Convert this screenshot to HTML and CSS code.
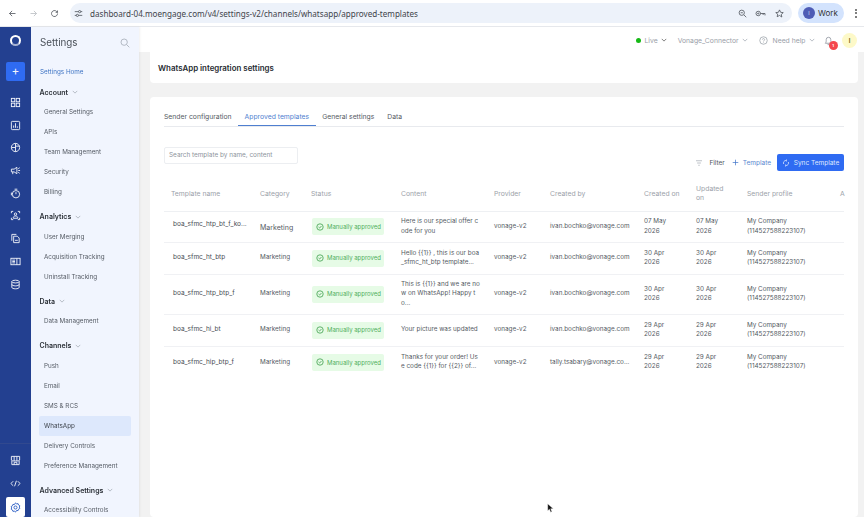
FILE: index.html
```html
<html lang="en">
<head>
	<meta charset="UTF-8">
	<title>WhatsApp integration settings</title>
	<link rel="stylesheet" href="styles.css">
</head>
<body>
	<div class="page">
		<div class="browser">
			<svg class="b-ico" viewBox="0 0 12 12"><path d="M10 6H2M5.500 2.500 2 6l3.500 3.500"/></svg>
			<svg class="b-ico faint" viewBox="0 0 12 12"><path d="M2 6h8M6.500 2.500 10 6 6.500 9.500"/></svg>
			<svg class="b-ico" viewBox="0 0 12 12"><path d="M10 6a4 4 0 1 1-1.200-2.800L10 4.500M10 2v2.500H7.500"/></svg>
			<div class="url">
				<svg class="b-ico small" viewBox="0 0 12 12"><path d="M1 3.500h5M9 3.500h2M3 8.500H1M6 8.500h5"/><circle cx="7.500" cy="3.500" r="1.500"/><circle cx="4.500" cy="8.500" r="1.500"/></svg>
				<span class="url-text">dashboard-04.moengage.com/v4/settings-v2/channels/whatsapp/approved-templates</span>
				<svg class="b-ico small push-right" viewBox="0 0 12 12"><circle cx="5" cy="5" r="3.500"/><path d="m8 8 3 3M3.500 5h3"/></svg>
				<svg class="b-ico key" viewBox="0 0 14 12"><circle cx="4" cy="6" r="3"/><circle cx="4" cy="6" r=".8"/><path d="M7 6h6v2.500M10.500 6v2"/></svg>
				<svg class="b-ico star" viewBox="0 0 12 12"><path d="m6 1.200 1.500 3.200 3.500.4-2.600 2.400.7 3.500L6 8.600l-3.100 1.700.7-3.500L1 4.800l3.500-.4z"/></svg>
			</div>
			<div class="work"><span class="work-dot">I</span>Work</div>
			<div class="dots"><i></i><i></i><i></i></div>
		</div>

		<div class="app">
			<div class="rail">
				<div class="logo"></div>
				<div class="plus">+</div>
				<div class="rail-icons">
					<svg viewBox="0 0 12 12"><rect x="1.500" y="1.500" width="3.700" height="3.700"/><rect x="6.800" y="1.500" width="3.700" height="3.700"/><rect x="1.500" y="6.800" width="3.700" height="3.700"/><rect x="6.800" y="6.800" width="3.700" height="3.700"/></svg>
					<svg viewBox="0 0 12 12"><rect x="1.500" y="1.500" width="9" height="9" rx="1"/><path d="M4 8.500V6M6 8.500v-5M8 8.500V7"/></svg>
					<svg viewBox="0 0 12 12"><circle cx="6" cy="6" r="4.500"/><path d="M6 1.500v9M1.500 6H6M6 4.500h4.300"/></svg>
					<svg viewBox="0 0 12 12"><path d="M1.500 4.500h3l3-2v7l-3-2h-3zM3 7.500v2.500M9 4l1.500-1M9 6h2M9 8l1.500 1"/></svg>
					<svg viewBox="0 0 12 12"><circle cx="6.500" cy="6.800" r="4"/><path d="M6.500 4.500v2.300M5 1.300h3M1.500 5v3"/></svg>
					<svg viewBox="0 0 12 12"><path d="M1.500 3.500v-2h2M8.500 1.500h2v2M10.500 8.500v2h-2M3.500 10.500h-2v-2"/><circle cx="6" cy="4.500" r="1.300"/><path d="M3.500 9c0-1.700 1-2.500 2.500-2.500S8.500 7.300 8.500 9z"/></svg>
					<svg viewBox="0 0 12 12"><path d="M2 8.500V1.500h5M4 10.500v-7h4l2 2v5zM5.500 8h3"/></svg>
					<svg viewBox="0 0 12 12"><rect x="1" y="2.500" width="10" height="7"/><path d="M2.500 4.500h3M2.500 6h3M2.500 7.500h3M7.500 2.500v7"/></svg>
					<svg viewBox="0 0 12 12"><ellipse cx="6" cy="2.800" rx="4" ry="1.500"/><path d="M2 2.800v6.400c0 .8 1.800 1.500 4 1.500s4-.7 4-1.500V2.800M2 6c0 .8 1.800 1.500 4 1.500S10 6.800 10 6"/></svg>
				</div>
				<div class="rail-bottom">
					<svg viewBox="0 0 12 12"><path d="M1.500 1.500h9v4l-1.500 1H3l-1.500-1zM2 6v4.500h8V6M4.500 1.500v5M7.500 1.500v5M4.500 10.500V8h3v2.500"/></svg>
					<svg viewBox="0 0 12 12"><path d="M3.500 3.500 1 6l2.500 2.500M8.500 3.500 11 6 8.500 8.500M7 3 5 9"/></svg>
					<div class="gear">
						<svg viewBox="0 0 12 12"><path d="m6 1 1.200 1 1.600-.2.500 1.500 1.400.8-.5 1.500.5 1.500-1.400.8-.5 1.500-1.600-.2L6 11 4.800 10l-1.600.2-.5-1.500-1.400-.8.5-1.500-.5-1.500 1.400-.8.500-1.500 1.600.2z"/><circle cx="6" cy="6" r="1.700"/></svg>
					</div>
				</div>
			</div>

			<div class="sidebar">
				<div class="side-head">
					<span class="side-title">Settings</span>
					<svg class="side-search" viewBox="0 0 12 12"><circle cx="5" cy="5" r="3.800"/><path d="m8 8 3.200 3.200"/></svg>
				</div>
				<div class="side-home">Settings Home</div>
				<div class="side-group"><span>Account</span><svg class="chev" viewBox="0 0 8 5"><path d="m1 1 3 3 3-3"/></svg></div>
				<div class="side-item">General Settings</div>
				<div class="side-item">APIs</div>
				<div class="side-item">Team Management</div>
				<div class="side-item">Security</div>
				<div class="side-item">Billing</div>
				<div class="side-group gap"><span>Analytics</span><svg class="chev" viewBox="0 0 8 5"><path d="m1 1 3 3 3-3"/></svg></div>
				<div class="side-item">User Merging</div>
				<div class="side-item">Acquisition Tracking</div>
				<div class="side-item">Uninstall Tracking</div>
				<div class="side-group gap"><span>Data</span><svg class="chev" viewBox="0 0 8 5"><path d="m1 1 3 3 3-3"/></svg></div>
				<div class="side-item">Data Management</div>
				<div class="side-group gap"><span>Channels</span><svg class="chev" viewBox="0 0 8 5"><path d="m1 1 3 3 3-3"/></svg></div>
				<div class="side-item">Push</div>
				<div class="side-item">Email</div>
				<div class="side-item">SMS &amp; RCS</div>
				<div class="side-item active">WhatsApp</div>
				<div class="side-item">Delivery Controls</div>
				<div class="side-item">Preference Management</div>
				<div class="side-group gap"><span>Advanced Settings</span><svg class="chev" viewBox="0 0 8 5"><path d="m1 1 3 3 3-3"/></svg></div>
				<div class="side-item">Accessibility Controls</div>
			</div>

			<div class="main">
				<div class="topbar">
					<span class="live-dot"></span>
					<span class="top-item dark">Live<svg class="chev" viewBox="0 0 8 5"><path d="m1 1 3 3 3-3"/></svg></span>
					<span class="top-item">Vonage_Connector<svg class="chev" viewBox="0 0 8 5"><path d="m1 1 3 3 3-3"/></svg></span>
					<span class="top-item last-item"><svg class="help" viewBox="0 0 12 12"><circle cx="6" cy="6" r="5"/><path d="M4.500 4.800C4.500 3 7.500 3 7.500 4.800 7.500 6 6 6 6 7.300M6 8.500v.7"/></svg>Need help<svg class="chev" viewBox="0 0 8 5"><path d="m1 1 3 3 3-3"/></svg></span>
					<span class="bell">
						<svg viewBox="0 0 12 12"><path d="M2.500 9c1-1 1-2 1-4a2.500 2.500 0 0 1 5 0c0 2 0 3 1 4zM5 10.500h2"/></svg>
						<b class="bell-badge">1</b>
					</span>
					<span class="avatar">I</span>
				</div>

				<div class="content">
					<div class="card head-card">WhatsApp integration settings</div>
					<div class="card body-card">
						<div class="tabs">
							<span class="tab">Sender configuration</span>
							<span class="tab on">Approved templates</span>
							<span class="tab">General settings</span>
							<span class="tab">Data</span>
						</div>
						<div class="tools">
							<div class="search">Search template by name, content</div>
							<div class="tool-right">
								<svg class="filter" viewBox="0 0 10 8"><path d="M1 1h8M2.500 4h5M4 7h2"/></svg>
								<span class="filter-text">Filter</span>
								<span class="add"><svg viewBox="0 0 10 10"><path d="M5 1v8M1 5h8"/></svg>Template</span>
								<span class="sync"><svg viewBox="0 0 12 12"><path d="M2.500 7.500A3.800 3.800 0 0 1 6 2.200M9.500 4.500A3.800 3.800 0 0 1 6 9.800M6 .8l1.500 1.400L6 3.600M6 8.400l-1.500 1.400L6 11.200"/></svg>Sync Template</span>
							</div>
						</div>
						<table class="grid">
							<colgroup>
								<col class="c1"><col class="c2"><col class="c3"><col class="c4"><col class="c5"><col class="c6"><col class="c7"><col class="c8"><col class="c9"><col class="c10">
							</colgroup>
							<thead>
								<tr><th>Template name</th><th>Category</th><th>Status</th><th>Content</th><th>Provider</th><th>Created by</th><th>Created on</th><th>Updated<br>on</th><th>Sender profile</th><th>A</th></tr>
							</thead>
							<tbody>
								<tr class="r1">
									<td class="name">boa_sfmc_htp_bt_f_ko...</td><td class="big">Marketing</td>
									<td><span class="pill"><svg viewBox="0 0 10 10"><circle cx="5" cy="5" r="4"/><path d="m3.200 5 1.300 1.300 2.300-2.500"/></svg>Manually approved</span></td>
									<td>Here is our special offer c<br>ode for you</td><td>vonage-v2</td><td>ivan.bochko@vonage.com</td><td>07 May<br>2026</td><td>07 May<br>2026</td><td>My Company<br>(114527588223107)</td><td></td>
								</tr>
								<tr class="r2">
									<td class="name">boa_sfmc_ht_btp</td><td>Marketing</td>
									<td><span class="pill"><svg viewBox="0 0 10 10"><circle cx="5" cy="5" r="4"/><path d="m3.200 5 1.300 1.300 2.300-2.500"/></svg>Manually approved</span></td>
									<td>Hello {{1}} , this is our boa<br>_sfmc_ht_btp template...</td><td>vonage-v2</td><td>ivan.bochko@vonage.com</td><td>30 Apr<br>2026</td><td>30 Apr<br>2026</td><td>My Company<br>(114527588223107)</td><td></td>
								</tr>
								<tr class="r3">
									<td class="name">boa_sfmc_htp_btp_f</td><td>Marketing</td>
									<td><span class="pill"><svg viewBox="0 0 10 10"><circle cx="5" cy="5" r="4"/><path d="m3.200 5 1.300 1.300 2.300-2.500"/></svg>Manually approved</span></td>
									<td>This is {{1}} and we are no<br>w on WhatsApp! Happy t<br>o...</td><td>vonage-v2</td><td>ivan.bochko@vonage.com</td><td>30 Apr<br>2026</td><td>30 Apr<br>2026</td><td>My Company<br>(114527588223107)</td><td></td>
								</tr>
								<tr class="r2">
									<td class="name">boa_sfmc_hi_bt</td><td>Marketing</td>
									<td><span class="pill"><svg viewBox="0 0 10 10"><circle cx="5" cy="5" r="4"/><path d="m3.200 5 1.300 1.300 2.300-2.500"/></svg>Manually approved</span></td>
									<td>Your picture was updated</td><td>vonage-v2</td><td>ivan.bochko@vonage.com</td><td>29 Apr<br>2026</td><td>29 Apr<br>2026</td><td>My Company<br>(114527588223107)</td><td></td>
								</tr>
								<tr class="r2 last">
									<td class="name">boa_sfmc_hip_btp_f</td><td>Marketing</td>
									<td><span class="pill"><svg viewBox="0 0 10 10"><circle cx="5" cy="5" r="4"/><path d="m3.200 5 1.300 1.300 2.300-2.500"/></svg>Manually approved</span></td>
									<td>Thanks for your order! Us<br>e code {{1}} for {{2}} of...</td><td>vonage-v2</td><td>tally.tsabary@vonage.co...</td><td>29 Apr<br>2026</td><td>29 Apr<br>2026</td><td>My Company<br>(114527588223107)</td><td></td>
								</tr>
							</tbody>
						</table>
					</div>
				</div>
			</div>
		</div>

		<svg class="cursor" viewBox="0 0 10 14"><path d="M1 1v10l2.500-2.300L5.200 13l1.800-.8-1.700-4.100H9z"/></svg>
	</div>
</body>
</html>
```

FILE: styles.css
```css
body{
	margin: 0;
	overflow: hidden;
	background: #fff;
	font-family: Inter, "Liberation Sans", sans-serif;
}
svg{
	fill: none;
	stroke: currentColor;
	stroke-width: 1;
	flex: none;
}
.page{
	width: 864px;
	height: 517px;
	overflow: hidden;
	filter: blur(.45px);
	will-change: filter;
	position: relative;
}

/* browser bar */
.browser{
	height: 26px;
	display: flex;
	align-items: center;
	padding: 0 0 0 8px;
	border-bottom: 1px solid #e6e8ec;
	color: #444a52;
}
.b-ico{
	width: 9px;
	height: 9px;
	margin-right: 12px;
}
.b-ico.faint{
	color: #b4b8be;
}
.url{
	width: 722px;
	height: 20px;
	margin-left: -1px;
	padding: 0 0 0 4px;
	background: #edf2fa;
	border-radius: 10px;
	display: flex;
	align-items: center;
	box-sizing: border-box;
}
.b-ico.small{
	margin-right: 4px;
}
.url-text{
	font-size: 8.100px;
	color: #3f444b;
	margin-left: 3px;
	white-space: nowrap;
	font-family: "Noto Sans", sans-serif;
}
.push-right{
	margin-left: auto;
}
.b-ico.key{
	width: 11px;
	margin: 0 9px 0 4px;
}
.b-ico.star{
	margin-right: 8px;
}
.work{
	width: 46px;
	height: 20px;
	margin-left: 6px;
	border-radius: 10px;
	background: #d3e3fd;
	display: flex;
	align-items: center;
	font-size: 8px;
	color: #333;
	box-sizing: border-box;
	padding-left: 5px;
	gap: 3px;
}
.work-dot{
	width: 12px;
	height: 12px;
	border-radius: 50%;
	background: #4d5bb5;
	color: #dfe3f7;
	font-size: 5px;
	text-align: center;
	line-height: 12px;
}
.dots{
	margin-left: 11px;
	display: flex;
	flex-direction: column;
	gap: 1.500px;
}
.dots i{
	width: 2px;
	height: 2px;
	border-radius: 50%;
	background: #555;
}

/* app frame */
.app{
	display: flex;
	height: 490px;
}
.rail{
	width: 31px;
	background: #234090;
	color: #f2f4fa;
	display: flex;
	flex-direction: column;
	align-items: center;
	flex: none;
}
.logo{
	width: 11px;
	height: 11px;
	margin-top: 8px;
	border: 2.500px solid #fff;
	border-bottom-color: rgba(255,255,255,.6);
	border-radius: 50%;
	box-sizing: border-box;
}
.plus{
	width: 19px;
	height: 19px;
	margin-top: 16px;
	background: #2f6bf2;
	border-radius: 2px;
	text-align: center;
	font-size: 12px;
	line-height: 18px;
}
.rail-icons{
	margin-top: 16px;
	display: flex;
	flex-direction: column;
	gap: 11.700px;
}
.rail-icons svg,.rail-bottom svg{
	width: 11px;
	height: 11px;
	display: block;
}
.rail-bottom{
	margin-top: auto;
	width: 31px;
	padding-top: 11px;
	border-top: 1px solid #31498f;
	display: flex;
	flex-direction: column;
	align-items: center;
	gap: 12px;
	height: 74px;
	box-sizing: border-box;
}
.rail .gear{
	width: 19px;
	height: 20px;
	margin-top: -4px;
	background: #fff;
	border-radius: 2px;
	color: #2a5cc4;
	display: flex;
	align-items: center;
	justify-content: center;
}

/* settings list */
.sidebar{
	width: 108px;
	flex: none;
	background: #f1f5fe;
	box-shadow: 1px 0 2px rgba(0,0,0,.06);
	position: relative;
	overflow: hidden;
}
.side-head{
	height: 31px;
	padding: 0 9px 4px 9px;
	display: flex;
	align-items: center;
	justify-content: space-between;
}
.side-title{
	font-size: 9.800px;
	color: #4a5058;
}
.side-search{
	width: 10px;
	height: 10px;
	color: #a6adb8;
}
.side-home{
	height: 20px;
	line-height: 20px;
	padding-left: 9px;
	font-size: 6.300px;
	color: #3f74c4;
}
.side-group{
	height: 20px;
	padding-left: 8.500px;
	display: flex;
	align-items: center;
	gap: 4px;
	font-size: 7px;
	font-weight: 600;
	color: #2c3138;
}
.side-group.gap{
	margin-top: 4.500px;
}
.chev{
	width: 6px;
	height: 4px;
	color: #a3a9b3;
}
.side-item{
	height: 20px;
	line-height: 20px;
	margin-left: 8px;
	padding-left: 5px;
	width: 92px;
	box-sizing: border-box;
	font-size: 6.300px;
	color: #555b64;
	white-space: nowrap;
}
.side-item.active{
	background: #dde8fc;
	border-radius: 2px;
	color: #3f454d;
}

/* main area */
.main{
	flex: 1;
	display: flex;
	flex-direction: column;
	background: #f2f2f2;
	min-width: 0;
}
.topbar{
	height: 25px;
	flex: none;
	box-sizing: border-box;
	padding: 1px 7px 0 0;
	background: #fff;
	display: flex;
	align-items: center;
	justify-content: flex-end;
	font-size: 6.800px;
	color: #9aa0a8;
}
.live-dot{
	width: 5px;
	height: 5px;
	border-radius: 50%;
	background: #16b916;
	margin-right: 4px;
}
.top-item{
	display: flex;
	align-items: center;
	gap: 3px;
	margin-right: 11px;
	white-space: nowrap;
}
.top-item.last-item{
	margin-right: 8px;
}
.top-item.dark .chev{
	color: #555;
}
.help{
	width: 9px;
	height: 9px;
	margin-right: 2px;
}
.bell{
	width: 11px;
	height: 11px;
	position: relative;
	margin-right: 8.500px;
}
.bell svg{
	width: 11px;
	height: 11px;
	display: block;
}
.bell-badge{
	position: absolute;
	right: -4px;
	bottom: -4px;
	width: 9px;
	height: 9px;
	line-height: 9px;
	border-radius: 50%;
	background: #f4474c;
	color: #fff;
	font-size: 4px;
	text-align: center;
}
.avatar{
	width: 15px;
	height: 15px;
	line-height: 15px;
	border-radius: 50%;
	background: #fdf9c8;
	color: #7a6a20;
	font-size: 6px;
	font-weight: 700;
	text-align: center;
}
.content{
	flex: 1;
	padding: 0 6px 0 11px;
	display: flex;
	flex-direction: column;
	gap: 14px;
	min-height: 0;
}
.card{
	background: #fff;
	border-radius: 4px;
}
.head-card{
	height: 31px;
	border-radius: 0 0 4px 4px;
	flex: none;
	padding: 1px 0 0 8px;
	font-size: 7.900px;
	font-weight: 600;
	color: #262a30;
	line-height: 31px;
	box-sizing: border-box;
}
.body-card{
	flex: 1;
	padding: 9px 14px 0;
}
.tabs{
	height: 20px;
	display: flex;
	border-bottom: 1px solid #e8eaee;
	font-size: 6.800px;
	color: #555b64;
}
.tab{
	padding: 4px 6.500px 0;
	line-height: 13px;
}
.tab:first-child{
	padding-left: 0;
}
.tab.on{
	color: #4f7fd0;
	border-bottom: 1.500px solid #4f7fd0;
	height: 15px;
}
.tools{
	margin-top: 20px;
	height: 24px;
	display: flex;
	align-items: flex-start;
	justify-content: space-between;
}
.search{
	width: 134px;
	height: 17px;
	line-height: 15px;
	box-sizing: border-box;
	border: 1px solid #eceef1;
	border-radius: 2px;
	padding-left: 4px;
	font-size: 6.400px;
	color: #8e949c;
}
.tool-right{
	display: flex;
	align-items: center;
	font-size: 6.500px;
	margin-top: 7px;
}
.filter{
	width: 8px;
	height: 6px;
	color: #a8aeb6;
	margin-right: 6px;
}
.filter-text{
	color: #50565e;
	margin-right: 7px;
}
.add{
	display: flex;
	align-items: center;
	gap: 4px;
	color: #5a86cf;
	margin-right: 6px;
}
.add svg{
	width: 7px;
	height: 7px;
	color: #3e72c9;
}
.sync{
	width: 67px;
	height: 17px;
	background: #2f6bf2;
	border-radius: 2px;
	color: #dfe9fd;
	display: flex;
	align-items: center;
	justify-content: center;
	gap: 4px;
}
.sync svg{
	width: 8px;
	height: 8px;
	color: #fff;
}

/* table */
.grid{
	width: 680px;
	margin-top: 5px;
	table-layout: fixed;
	border-collapse: collapse;
	font-size: 6.350px;
	line-height: 9.500px;
	color: #555b64;
}
.c1{width: 96px;}
.c2{width: 51px;}
.c3{width: 90px;}
.c4{width: 93px;}
.c5{width: 56px;}
.c6{width: 94px;}
.c7{width: 52px;}
.c8{width: 51px;}
.c9{width: 93px;}
.c10{width: 4px;}
.grid th{
	height: 35px;
	padding: 0 0 0 7px;
	text-align: left;
	font-weight: 400;
	font-size: 6.800px;
	color: #9ba1a9;
	border-bottom: 1px solid #eef0f3;
	overflow: visible;
	white-space: nowrap;
}
.grid th + th{
	padding-left: 0;
}
.grid td{
	padding: 0;
	border-bottom: 1px solid #f0f1f4;
}
.grid td.name{
	padding-left: 9px;
	font-size: 6.500px;
	color: #484d54;
}
.r1{height: 31px;}
.r2{height: 32px;}
.r3{height: 40px;}
.r1 td.name{
	padding-bottom: 3px;
}
.grid .last td{
	border-bottom: 0;
}
.grid td.big{
	font-size: 7px;
	padding-top: 2px;
}
.pill{
	width: 72px;
	height: 17px;
	margin-left: 1px;
	border-radius: 2px;
	background: #e6fbe6;
	color: #4fae5c;
	font-size: 6px;
	display: flex;
	align-items: center;
	gap: 3px;
	padding-left: 4px;
	box-sizing: border-box;
	white-space: nowrap;
}
.pill svg{
	width: 8px;
	height: 8px;
	color: #3f9f4c;
}
.cursor{
	position: absolute;
	left: 547px;
	top: 503px;
	width: 7px;
	height: 10px;
	fill: #111;
	stroke: #fff;
	stroke-width: .6;
}
```
